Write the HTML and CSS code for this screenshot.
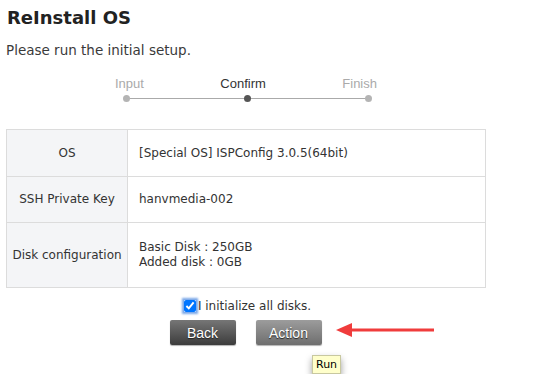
FILE: index.html
```html
<!DOCTYPE html>
<html lang="en">
<head>
    <meta charset="UTF-8">
    <title>ReInstall OS</title>
    <link rel="stylesheet" href="styles.css">
</head>
<body>
    <h1 class="title">ReInstall OS</h1>
    <p class="lead">Please run the initial setup.</p>

    <div class="wrap">
        <div class="steps">
            <div class="step-labels">
                <span>Input</span>
                <span class="current">Confirm</span>
                <span>Finish</span>
            </div>
            <div class="step-line">
                <i class="dot"></i>
                <i class="dot current"></i>
                <i class="dot"></i>
            </div>
        </div>

        <table class="info">
            <tr class="row-a">
                <th>OS</th>
                <td>[Special OS] ISPConfig 3.0.5(64bit)</td>
            </tr>
            <tr class="row-b">
                <th>SSH Private Key</th>
                <td>hanvmedia-002</td>
            </tr>
            <tr class="row-c">
                <th>Disk configuration</th>
                <td>Basic Disk : 250GB<br>Added disk : 0GB</td>
            </tr>
        </table>

        <label class="agree"><input type="checkbox" checked><span>I initialize all disks.</span></label>

        <div class="actions">
            <button class="btn btn-back">Back</button>
            <button class="btn btn-action">Action</button>
            <svg class="arrow" width="100" height="16" viewBox="0 0 100 16">
                <path d="M14 8 H98" stroke="#f03c3c" stroke-width="3"/>
                <path d="M0 8 L16 1 L16 15 Z" fill="#f03c3c"/>
            </svg>
        </div>
        <div class="tip-row">
            <div class="tip">Run</div>
        </div>
    </div>
</body>
</html>
```

FILE: styles.css
```css
body {
    margin: 0;
    font-family: "DejaVu Sans", Verdana, sans-serif;
    color: #333;
    background: #fff;
}
.title {
    margin: 0;
    padding: 6px 0 0 7px;
    font-size: 18px;
    line-height: 24px;
    color: #222;
}
.lead {
    margin: 12px 0 0 6px;
    font-size: 13.5px;
    line-height: 16px;
    color: #3a3a3a;
}
.wrap {
    width: 480px;
    margin-left: 6px;
}
.steps {
    width: 262px;
    margin: 18px 0 0 109px;
    font-family: "Liberation Sans", Arial, sans-serif;
}
.step-labels {
    display: flex;
    justify-content: space-between;
    font-size: 13px;
    line-height: 15px;
    color: #aaa;
}
.step-labels .current {
    color: #333;
}
.step-line {
    position: relative;
    display: flex;
    justify-content: space-between;
    align-items: center;
    margin: 4px 5px 0 8px;
    height: 7px;
}
.step-line::before {
    content: "";
    position: absolute;
    left: 3px;
    right: 3px;
    top: 3px;
    border-top: 1px solid #aaa;
}
.dot {
    position: relative;
    width: 7px;
    height: 7px;
    border-radius: 50%;
    background: #b4b4b4;
}
.dot.current {
    background: #555;
}
.info {
    width: 480px;
    margin-top: 27px;
    border-collapse: collapse;
    font-size: 12px;
    line-height: 15px;
}
.info th, .info td {
    border: 1px solid #dcdcdc;
}
.info th {
    width: 118px;
    background: #f4f5f7;
    font-weight: normal;
    text-align: center;
}
.info td {
    padding-left: 11px;
    text-align: left;
}
.row-a { height: 47px; }
.row-b { height: 46px; }
.row-c { height: 65px; }
.agree {
    display: flex;
    justify-content: center;
    align-items: center;
    margin-top: 11px;
    padding-left: 3px;
    font-size: 12px;
    line-height: 14px;
}
.agree input {
    width: 12px;
    height: 12px;
    margin: 0 2px 0 0;
    box-shadow: 0 0 2px 2px #7aa7e8;
    border-radius: 3px;
}
.actions {
    position: relative;
    display: flex;
    justify-content: center;
    gap: 20px;
    margin-top: 7px;
    padding-right: 1px;
}
.btn {
    width: 66px;
    height: 25px;
    border: none;
    border-radius: 2px;
    color: #fff;
    font-family: "Liberation Sans", Arial, sans-serif;
    font-size: 14px;
    text-shadow: 0 1px 1px #222;
    box-shadow: 0 1px 1px rgba(0, 0, 0, 0.3);
    cursor: pointer;
}
.btn-back {
    background: linear-gradient(#767676, #3c3c3c);
}
.btn-action {
    background: linear-gradient(#9c9c9c, #6e6e6e);
}
.arrow {
    position: absolute;
    left: 330px;
    top: 2px;
}
.tip-row {
    display: flex;
    padding: 10px 0 0 306px;
}
.tip {
    padding: 1px 3px;
    background: #ffffcb;
    border: 1px solid #c8c8a0;
    font-size: 11px;
    line-height: 15px;
    color: #000;
    box-shadow: 0 4px 7px rgba(0, 0, 0, 0.4);
}
```
